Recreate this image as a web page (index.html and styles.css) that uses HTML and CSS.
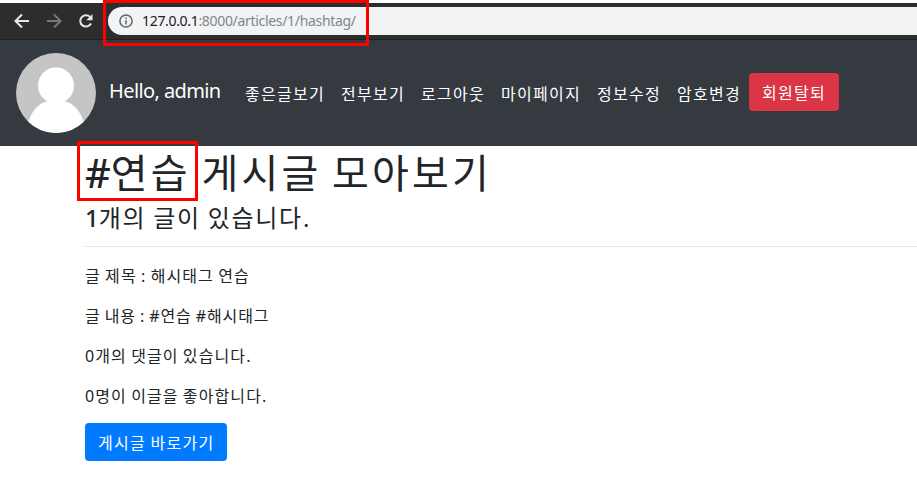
FILE: index.html
```html
<!DOCTYPE html>
<html lang="ko">
<head>
<meta charset="utf-8">
<title>해시태그</title>
<link rel="stylesheet" href="styles.css">
</head>
<body>
<header class="toolbar">
  <svg class="nav-icons" width="108" height="36" viewBox="0 0 108 36" fill="none" stroke-width="2">
    <path stroke="#e8e8e8" d="M29 18H16M22 11.5L15.5 18L22 24.5"/>
    <path stroke="#777" d="M47 18H60M54 11.5L60.5 18L54 24.5"/>
    <path stroke="#e8e8e8" d="M91 20.5A5.7 5.7 0 1 1 90 13.9"/>
    <path fill="#e8e8e8" d="M92.5 11V17.2H86.3Z"/>
  </svg>
  <div class="address">
    <svg class="info" width="14" height="14" viewBox="0 0 14 14" fill="none" stroke="#5f6368" stroke-width="1.5"><circle cx="7" cy="7" r="6.1"/><path d="M7 6.2V10.4M7 3.5V5"/></svg>
    <span class="url"><b>127.0.0.1</b>:8000/articles/1/hashtag/</span>
  </div>
  <div class="mark mark-url"></div>
</header>
<nav class="navbar">
  <svg class="avatar" width="80" height="80" viewBox="0 0 80 80">
    <clipPath id="round"><circle cx="40" cy="40" r="40"/></clipPath>
    <g clip-path="url(#round)"><rect width="80" height="80" fill="#c5c5c5"/><circle cx="40" cy="32.5" r="18" fill="#fff"/><path fill="#fff" d="M12 70C15 59 22 50 32 48H48C58 50 65 59 68 70V80H12Z"/></g>
  </svg>
  <span class="brand">Hello, admin</span>
  <a class="link">좋은글보기</a>
  <a class="link">전부보기</a>
  <a class="link">로그아웃</a>
  <a class="link">마이페이지</a>
  <a class="link">정보수정</a>
  <a class="link">암호변경</a>
  <a class="btn btn-danger">회원탈퇴</a>
</nav>
<main class="content">
  <h1><span class="hash">#</span>연습 게시글 모아보기</h1>
  <h3><span class="count">1</span>개의 글이 있습니다.</h3>
  <hr>
  <p>글 제목 : 해시태그 연습</p>
  <p class="tags">글 내용 : #연습 #해시태그</p>
  <p>0개의 댓글이 있습니다.</p>
  <p>0명이 이글을 좋아합니다.</p>
  <a class="btn btn-primary">게시글 바로가기</a>
  <div class="mark mark-tag"></div>
</main>
</body>
</html>
```
FILE: styles.css
```css
* { box-sizing: border-box; }
body {
  margin: 0;
  padding-top: 3px;
  background: #fff;
  color: #212529;
  font: 16px/24px "Noto Sans", "Noto Sans CJK KR", sans-serif;
  overflow: hidden;
}
.toolbar {
  position: relative;
  display: flex;
  align-items: flex-start;
  height: 37px;
  background: #2d2d2d;
  border-bottom: 1px solid #1f2022;
}
.nav-icons { flex: none; }
.address {
  display: flex;
  align-items: center;
  flex: 1;
  height: 28px;
  margin-top: 4px;
  padding-left: 11px;
  background: #f1f3f4;
  border-radius: 14px 0 0 14px;
}
.url {
  margin-left: 9px;
  color: #80868b;
  font-size: 14px;
  line-height: 20px;
  letter-spacing: -0.32px;
  white-space: nowrap;
}
.url b { color: #202124; font-weight: 400; }
.mark { position: absolute; border: 3px solid #f00; }
.mark-url { left: 103px; top: -3px; width: 266px; height: 46px; }
.navbar {
  display: flex;
  align-items: center;
  height: 106px;
  padding: 0 16px;
  background: #343a40;
  color: #fff;
}
.avatar { margin-right: 13px; }
.brand {
  width: 128px;
  font-size: 20px;
  line-height: 30px;
  letter-spacing: -0.6px;
  margin-top: -4px;
  white-space: nowrap;
}
.link {
  padding: 2px 8px 0;
  letter-spacing: 1.28px;
  white-space: nowrap;
}
.btn {
  display: inline-block;
  height: 38px;
  padding: 7px 12px 5px;
  border: 1px solid transparent;
  border-radius: 4px;
  color: #fff;
  letter-spacing: 1.28px;
  word-spacing: -1px;
  white-space: nowrap;
}
.btn-danger { margin-bottom: 2px; background: #dc3545; }
.btn-primary { background: #007bff; }
.content { position: relative; padding-left: 85px; }
h1, h3 { margin: 0 0 8px; font-weight: 400; white-space: nowrap; }
h1 {
  height: 48px;
  font-size: 40px;
  line-height: 54px;
  letter-spacing: 3.2px;
  word-spacing: -3px;
}
h3 {
  height: 34px;
  font-size: 24px;
  line-height: 32px;
  letter-spacing: 1.75px;
  word-spacing: -1.2px;
}
.hash, .count { font-weight: 500; letter-spacing: 0; }
hr { margin: 10px 0 17px; border: 0; border-top: 1px solid #e5e5e5; }
p {
  margin: 0 0 16px;
  letter-spacing: 1.1px;
  word-spacing: -1px;
}
.tags { letter-spacing: 0.9px; }
p:last-of-type { margin-bottom: 15px; }
.mark-tag { left: 77px; top: -5px; width: 121px; height: 60px; }
```
